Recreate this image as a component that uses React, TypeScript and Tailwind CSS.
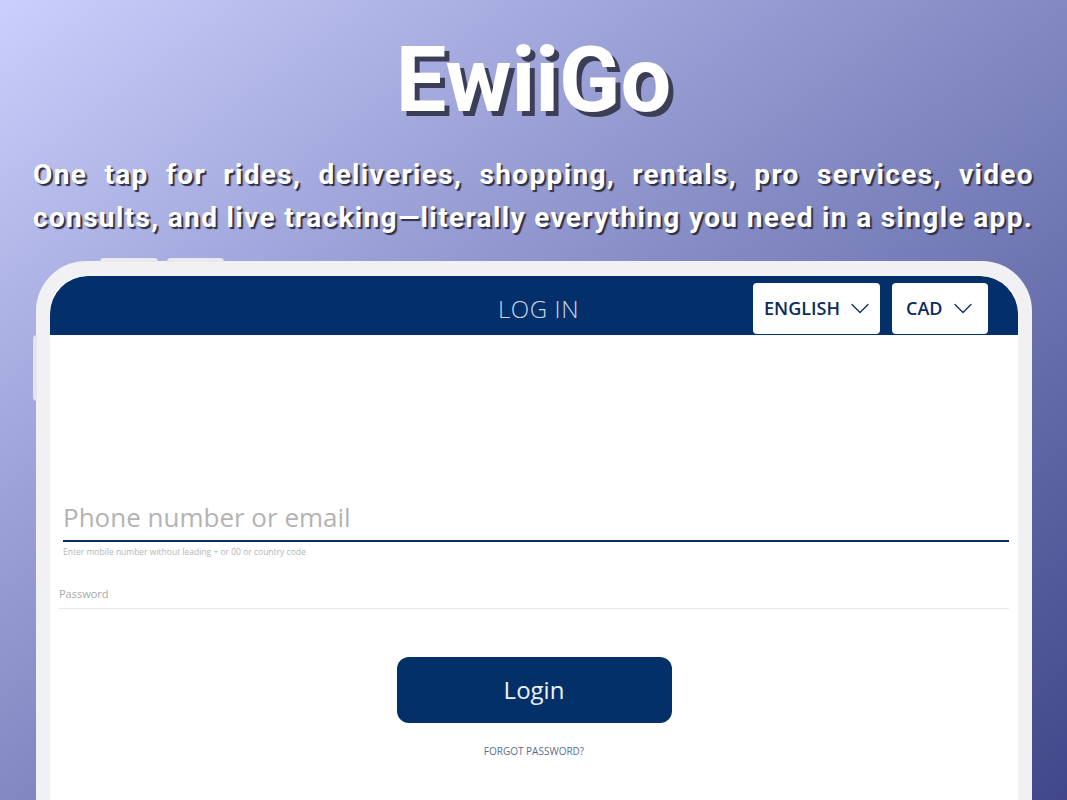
export default function App() {
  const Chevron = () => (
    <svg width="18" height="11" viewBox="0 0 18 11" fill="none" stroke="#0c2c5c" strokeWidth="1.3" strokeLinecap="round" strokeLinejoin="round">
      <polyline points="1,1.5 9,9.5 17,1.5" />
    </svg>
  );

  return (
    <div className="relative w-[1067px] h-[800px] overflow-hidden bg-linear-to-br from-[#cbcffc] to-[#41478a] font-['Roboto',sans-serif]">
      {/* Heading */}
      <h1 className="pt-[36px] text-center text-[90px] leading-none font-bold text-white [text-shadow:5px_5px_0_#3b3e56]">
        EwiiGo
      </h1>
      <p className="mt-[27px] px-[33px] text-[28px] leading-[43px] font-bold tracking-[1.35px] text-white text-justify [text-shadow:2px_2px_1px_#2c2f45]">
        One tap for rides, deliveries, shopping, rentals, pro services, video consults, and live tracking—literally everything you need in a single app.
      </p>

      {/* Device */}
      <div className="relative mt-[22px] ml-[36px] w-[996px]">
        {/* side buttons */}
        <div className="absolute -top-[3px] left-[64px] w-[58px] h-[4px] rounded-t-sm bg-[#e9e9ee]" />
        <div className="absolute -top-[3px] left-[131px] w-[57px] h-[4px] rounded-t-sm bg-[#e9e9ee]" />
        <div className="absolute top-[74px] -left-[3px] w-[4px] h-[66px] rounded-l-sm bg-[#e4e4ea]" />

        <div className="h-[600px] rounded-t-[50px] border-[14px] border-t-[15px] border-b-0 border-[#f1f1f3] bg-white overflow-hidden font-['Open_Sans',sans-serif]">
          {/* Header */}
          <div className="grid grid-cols-[1fr_auto_1fr] items-center h-[59px] bg-[#03306a] rounded-t-[38px]">
            <div />
            <div className="pl-[9px] pt-[7px] text-[24px] font-light text-[#cdd6e7] tracking-wide">LOG IN</div>
            <div className="flex justify-end items-start h-full pt-[7px] pr-[30px] gap-[12px]">
              <div className="flex items-center justify-between w-[127px] h-[51px] pl-[11px] pr-[11px] rounded-[4px] bg-white text-[18px] font-semibold text-[#0c2c5c]">
                ENGLISH
                <Chevron />
              </div>
              <div className="flex items-center justify-between w-[96px] h-[51px] pl-[14px] pr-[16px] rounded-[4px] bg-white text-[18px] font-semibold text-[#0c2c5c]">
                CAD
                <Chevron />
              </div>
            </div>
          </div>

          {/* Form */}
          <div className="pt-[164px] pr-[9px]">
            <div className="ml-[13px]">
              <div className="h-[43px] pb-[4px] flex items-center border-b-2 border-[#0c2c5c] text-[26px] text-[#b3b3b3]">
                Phone number or email
              </div>
              <div className="mt-[4px] text-[8.5px] leading-[12px] text-[#b5b5b5]">
                Enter mobile number without leading + or 00 or country code
              </div>
            </div>
            <div className="ml-[9px] mt-[29px] pb-[7px] border-b border-[#e8e8e8] text-[11px] leading-[14px] text-[#a9a9a9]">
              Password
            </div>
          </div>

          <div className="flex flex-col items-center">
            <button className="mt-[48px] w-[275px] h-[66px] rounded-[12px] bg-[#04306a] text-[24px] text-[#eef1f6]">
              Login
            </button>
            <div className="mt-[21px] text-[10px] leading-[14px] text-[#5b6d8e]">FORGOT PASSWORD?</div>
          </div>
        </div>
      </div>
    </div>
  );
}
